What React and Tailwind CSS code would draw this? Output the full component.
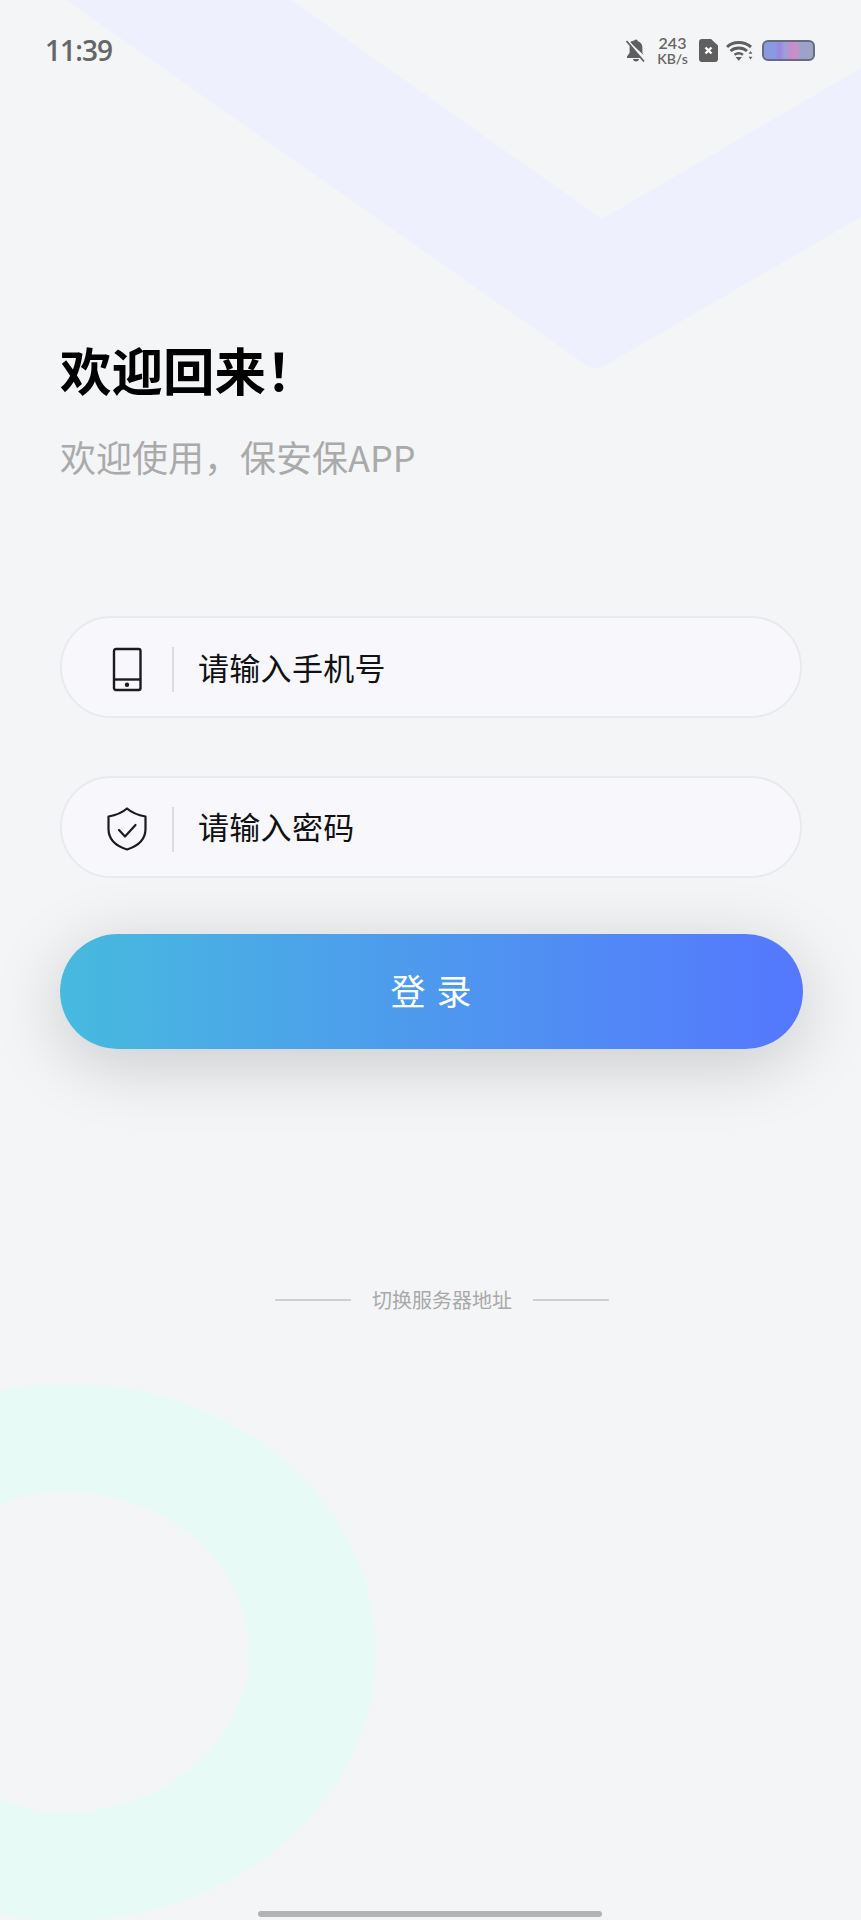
const cjk = "font-['Noto_Sans_CJK_SC','Noto_Sans',sans-serif]";

function Decor() {
  return (
    <svg className="absolute inset-0" width="861" height="1920" viewBox="0 0 861 1920" fill="none">
      <path d="M66 0 L291 0 L602 219 L861 68 L861 217 L606 365 Q596 371 586 365 Z" fill="#eef0fd" />
      <path fillRule="evenodd" d="M66 1383 C237 1383 376 1503 376 1652 C376 1801 237 1921 66 1921 C40 1921 20 1919 0 1914 L0 1391 C20 1386 40 1383 66 1383 Z M66 1492 C40 1492 20 1496 0 1505 L0 1799 C20 1808 40 1812 66 1812 C167 1812 249 1740 249 1652 C249 1564 167 1492 66 1492 Z" fill="#e7faf6" />
    </svg>
  );
}

function StatusBar() {
  return (
    <div className="relative flex h-[100px] items-start justify-between pl-[45px] pr-[46px] pt-[34px]">
      <span className="font-['Open_Sans',sans-serif] text-[28px] font-semibold leading-[32px] tracking-[-0.9px] text-[#666666]">11:39</span>
      <div className="flex items-center pt-[1px]">
        <svg width="20" height="23" viewBox="0 0 20 23">
          <path d="M10 0.5c-1 0-1.8.8-1.8 1.8C5.4 3 3.6 5.400 3.600 8.600v5.200L1 17.500v1.500h13.500L3 3.500" fill="#5f5f5f" />
          <path d="M4 3.500C5 2.800 6.500 2 8.200 2.300 8.200 1.300 9 .5 10 .5s1.800.8 1.800 1.800c2.800.7 4.600 3.100 4.600 6.300v5.200l1.200 2.200L4 3.500Z" fill="#5f5f5f" />
          <path d="M7 20h6c0 1.500-1.300 2.500-3 2.500S7 21.500 7 20Z" fill="#5f5f5f" />
          <path d="M1.500 1 19 21.500" stroke="#f4f5f7" strokeWidth="1.500" />
          <path d="M0.500 2 18 22.500" stroke="#5f5f5f" strokeWidth="1.700" />
        </svg>
        <div className="ml-[12px] flex w-[29px] flex-col items-center font-['Lato',sans-serif] font-semibold text-[#666666]">
          <span className="text-[16px] leading-[16px]">243</span>
          <span className="text-[14px] leading-[15px]">KB/s</span>
        </div>
        <svg className="ml-[12px]" width="19" height="23" viewBox="0 0 19 23">
          <path d="M3 0h9l7 6.500V20a3 3 0 0 1-3 3H3a3 3 0 0 1-3-3V3a3 3 0 0 1 3-3Z" fill="#5f5f5f" />
          <path d="M6.500 8.500l6 6M12.500 8.500l-6 6" stroke="#fff" strokeWidth="2.400" />
        </svg>
        <svg className="ml-[8px]" width="27" height="21" viewBox="0 0 27 21" fill="none">
          <path d="M1 7C7 1 18 1 25 7" stroke="#5f5f5f" strokeWidth="3" />
          <path d="M4.500 11C9 7 16.500 7 21 11" stroke="#5f5f5f" strokeWidth="2.800" />
          <path d="M8.500 14.800C11 13 14.500 13 17 14.800" stroke="#5f5f5f" strokeWidth="2.600" />
          <path d="M9.500 17h6.500L12.700 20.800Z" fill="#5f5f5f" />
          <path d="M24.500 11l-1.900 2.800h3.800ZM24.500 19.500l-1.900-2.800h3.800Z" fill="#5f5f5f" />
        </svg>
        <div className="ml-[9px] h-[21px] w-[53px] rounded-[6px] border-2 border-[#666b80] bg-[linear-gradient(90deg,#8b9ae0_0%,#8b9ae0_22%,#9a84e2_32%,#9aa0d8_42%,#cc8ac8_58%,#c890c8_66%,#9ca3c8_76%,#9ca3c4_100%)]" />
      </div>
    </div>
  );
}

function Field({ icon, children, className, textClass }) {
  return (
    <div className={`flex h-[102px] w-[742px] items-center rounded-full border-2 border-[#e9eaee] bg-[#f7f7fc] pl-[45px] ${className}`}>
      <div className="mt-[4px] flex w-[40px] justify-center">{icon}</div>
      <div className="ml-[25px] mt-[4px] h-[45px] w-[2px] bg-[#dcdcdf]" />
      <span className={`ml-[24px] ${cjk} text-[31px] leading-[40px] tracking-[0.3px] text-[#111111] ${textClass}`}>{children}</span>
    </div>
  );
}

const Phone = (
  <svg width="30" height="45" viewBox="0 0 30 45" fill="none" stroke="#1a1a22" strokeWidth="2.400">
    <rect x="2" y="2" width="26.500" height="41" rx="2" />
    <path d="M2 32.500h26.500" />
    <circle cx="15" cy="37.800" r="2.200" fill="#1a1a22" stroke="none" />
  </svg>
);

const Shield = (
  <svg width="40" height="44" viewBox="0 0 40 44" fill="none" stroke="#1a1a22" strokeWidth="2.200" strokeLinejoin="round" strokeLinecap="round">
    <path d="M20 1.500C24 5 30 8 38.500 9.500V22C38.500 32 31 39 20 42.500C9 39 1.500 32 1.500 22V9.500C10 8 16 5 20 1.500Z" />
    <path d="M12 23l6 6.500L28.500 18" />
  </svg>
);

export default function App() {
  return (
    <div className="relative h-[1920px] w-[861px] overflow-hidden bg-[#f4f5f7]">
      <Decor />
      <StatusBar />
      <main className="relative flex flex-col pl-[60px]">
        <h1 className={`mt-[235px] ${cjk} text-[51.500px] font-bold leading-[68px] text-black`}>欢迎回来！</h1>
        <p className={`mt-[28px] ${cjk} text-[36px] leading-[50px] text-[#aaaaaa]`}>欢迎使用，保安保APP</p>
        <Field className="mt-[135px]" textClass="" icon={Phone}>请输入手机号</Field>
        <Field className="mt-[58px]" textClass="mb-[2px]" icon={Shield}>请输入密码</Field>
        <button className={`mt-[56px] h-[115px] w-[743px] rounded-full bg-[linear-gradient(90deg,#47bade,#5577fe)] pb-[2px] pl-[10px] ${cjk} text-[35px] tracking-[11px] text-white shadow-[0_14px_70px_rgba(0,0,0,0.18)]`}>登录</button>
        <div className={`mt-[236px] ml-[215px] flex items-center ${cjk} text-[20px] leading-[30px] text-[#a9a9a9]`}>
          <div className="h-[2px] w-[76px] bg-[#cfcfcf]" />
          <span className="ml-[21px]">切换服务器地址</span>
          <div className="ml-[21px] h-[2px] w-[76px] bg-[#cfcfcf]" />
        </div>
      </main>
      <div className="absolute bottom-[3px] left-[258px] h-[6px] w-[344px] rounded-full bg-[#b3b3b5]" />
    </div>
  );
}
